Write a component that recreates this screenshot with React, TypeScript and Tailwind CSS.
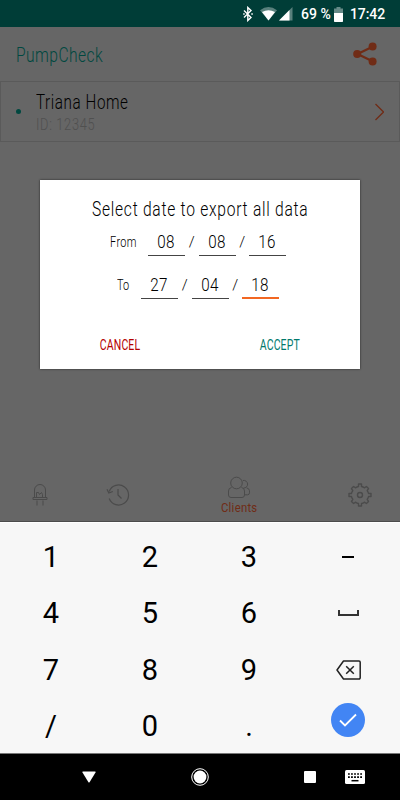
import React from 'react';

function StatusBar() {
  return (
    <div className="flex h-[27px] shrink-0 items-center bg-[#003d37] pl-[243px] pt-[1px] text-[14px] font-medium text-white">
      <svg className="h-4 w-[10px]" viewBox="0 0 10 16" fill="none" stroke="#fff" strokeWidth="1.4">
        <path d="M1 4.500 8 11.500 4.800 14.500V1.500L8 4.500 1 11.500" />
        <path d="M.2 8h1.500M8.300 8h1.500" strokeWidth="1.600" />
      </svg>
      <svg className="ml-[7px] h-[14px] w-[17px]" viewBox="0 0 17 14">
        <path d="M0 3.200Q8.500-3 17 3.200L8.500 13.500Z" fill="#fff" opacity=".35" />
        <path d="M2 5Q8.500 1.500 15 5L8.500 13.500Z" fill="#fff" />
      </svg>
      <svg className="ml-[2px] h-[14px] w-[14px]" viewBox="0 0 14 14">
        <path d="M0 13.500 13.500 0V13.500Z" fill="#fff" opacity=".35" />
        <path d="M0 13.500 10.500 3V13.500Z" fill="#fff" />
      </svg>
      <span className="ml-[8px] w-[28px] whitespace-nowrap">69 %</span>
      <svg className="ml-[5px] h-[15px] w-[9px]" viewBox="0 0 9 15">
        <path d="M2.500 0h4v1.500H9V15H0V1.500h2.500Z" fill="#fff" opacity=".4" />
        <path d="M0 6h9v8a1 1 0 0 1-1 1H1a1 1 0 0 1-1-1Z" fill="#fff" />
      </svg>
      <span className="ml-[7px] whitespace-nowrap tracking-[-0.1px]">17:42</span>
    </div>
  );
}

function Field({ value, line }: { value: string; line: string }) {
  return (
    <div className={'flex h-[26px] w-[37px] justify-center ' + line}>
      <span className="origin-center scale-x-[.8] text-[19px] leading-[24px] tracking-[0.500px]">{value}</span>
    </div>
  );
}

function Slash() {
  return <span className="w-[13.500px] pb-[3px] text-center text-[15px] leading-[22px]">/</span>;
}

function Dialog() {
  const plain = 'border-b border-[#444]';
  return (
    <div className="absolute left-[40px] top-[180px] flex h-[189px] w-[320px] flex-col bg-white font-light text-black shadow-[0_0_2px_#222]">
      <div className="mt-[17px] flex h-[24px] justify-center">
        <span className="origin-center translate-x-[0.500px] scale-x-[.78] whitespace-nowrap text-[20px] leading-[24px] tracking-[0.950px]">Select date to export all data</span>
      </div>
      <div className="mt-[9px] flex h-[26px] items-end pl-[70px]">
        <span className="w-[38px] origin-left scale-x-[.78] pb-[4px] text-[14px] leading-[20px] tracking-[0.500px]">From</span>
        <Field value="08" line={plain} />
        <Slash />
        <Field value="08" line={plain} />
        <Slash />
        <Field value="16" line={plain} />
      </div>
      <div className="mt-[17px] flex h-[26px] items-end pl-[77px]">
        <span className="w-[24px] origin-left scale-x-[.78] pb-[4px] text-[14px] leading-[20px]">To</span>
        <Field value="27" line={plain} />
        <Slash />
        <Field value="04" line={plain} />
        <Slash />
        <Field value="18" line="border-b-2 border-[#f26722]" />
      </div>
      <div className="mt-[36px] flex text-[14px] font-normal leading-[20px]">
        <span className="w-[160px] text-center text-[#b40000]"><span className="inline-block scale-x-[.75] tracking-[0.200px]">CANCEL</span></span>
        <span className="w-[160px] text-center text-[#00796b]"><span className="inline-block scale-x-[.75] tracking-[0.200px]">ACCEPT</span></span>
      </div>
    </div>
  );
}

function BottomTabs() {
  return (
    <div className="flex h-[51px] shrink-0 items-start pl-[32px]">
      <svg className="mt-[13px] h-[24px] w-[16px]" viewBox="0 0 16 24" fill="none" stroke="#4b4b4b">
        <path d="M2.500 14.500V7a5.500 5.500 0 0 1 11 0v7.500M1 14.500h14v2H1ZM5 17.500v5M11 17.500v5M4.500 14V9.500h2l1 2 2-2 1 2v2.500" />
      </svg>
      <svg className="ml-[58px] mt-[13px] h-[24px] w-[24px]" viewBox="0 0 24 24" fill="none" stroke="#4b4b4b" strokeWidth="1.200">
        <path d="M3.200 8.500a10 10 0 1 1 0 7M1 6.200l1.800 3.800 4-1.500M12 6v6l3.500 3.500" />
      </svg>
      <div className="ml-[89px] mt-[6px] flex w-[40px] flex-col items-center text-[13px] leading-[14px] text-[#702c16]">
        <svg className="h-[24px] w-[24px]" viewBox="0 0 24 24" fill="none" stroke="#4b4b4b">
          <circle cx="9.500" cy="7" r="5.800" />
          <path d="M4.500 11.500Q1.500 12 1.500 15v4q0 2.500 2.500 2.500h11q2.500 0 2.500-2.500v-4q0-3-3-3.500M16 4.500a3.800 3.800 0 1 1 .5 7.500M19.500 11.800q3 .8 3 3v2q0 2-2 2h-2.500" />
        </svg>
        <span className="origin-center translate-x-[0.500px] scale-x-[.84] whitespace-nowrap text-[13.500px] font-normal tracking-[0.300px]">Clients</span>
      </div>
      <svg className="ml-[89px] mt-[13px] h-[24px] w-[24px]" viewBox="0 0 24 24" fill="none" stroke="#4b4b4b" strokeWidth="1.400">
        <circle cx="12" cy="12" r="2.500" />
        <path d="M10.500 1h3v2.500q1.700.3 2.800 1.300L18.400 3.500l2.100 2.100-1.300 2.100q1 1.100 1.300 2.800H23v3h-2.500q-.3 1.700-1.300 2.800l1.300 2.100-2.100 2.100-2.100-1.300q-1.100 1-2.800 1.300V23h-3v-2.500q-1.700-.3-2.800-1.300l-2.100 1.300-2.100-2.100 1.300-2.100q-1-1.100-1.300-2.800H1v-3h2.500q.3-1.700 1.300-2.800L3.500 5.600l2.100-2.100 2.100 1.300q1.100-1 2.800-1.300Z" strokeLinejoin="round" />
      </svg>
    </div>
  );
}

function Key({ children }: { children: React.ReactNode }) {
  return <div className="flex items-center justify-center">{children}</div>;
}

function Keyboard() {
  return (
    <div className="h-[231px] shrink-0 overflow-hidden border-t border-white bg-[#f7f7f7] pl-[1.500px] pt-[6px]">
      <div className="grid grid-cols-[repeat(4,99px)] grid-rows-[repeat(4,56.500px)] text-[29px] leading-none text-black">
        <Key>1</Key><Key>2</Key><Key>3</Key>
        <Key><div className="h-[2px] w-[12px] bg-black" /></Key>
        <Key>4</Key><Key>5</Key><Key>6</Key>
        <Key><div className="mb-[1px] h-[6px] w-[21px] border-2 border-t-0 border-[#333]" /></Key>
        <Key>7</Key><Key>8</Key><Key>9</Key>
        <Key>
          <svg className="h-[20px] w-[25px]" viewBox="0 0 25 20" fill="none" stroke="#222" strokeWidth="1.500">
            <path d="M7.500 1H23a1.200 1.200 0 0 1 1.200 1.200v15.600A1.200 1.200 0 0 1 23 19H7.500L1 10Z" strokeLinejoin="round" />
            <path d="m10.200 6.200 7.600 7.600m0-7.600-7.600 7.600" />
          </svg>
        </Key>
        <Key>/</Key><Key>0</Key><Key>.</Key>
        <Key>
          <div className="mb-[13px] flex h-[34px] w-[34px] items-center justify-center rounded-full bg-[#4285f4]">
            <svg className="h-[14px] w-[18px]" viewBox="0 0 18 14" fill="none" stroke="#fff" strokeWidth="1.800"><path d="m1 7.500 5 5L17 1.500" /></svg>
          </div>
        </Key>
      </div>
    </div>
  );
}

function NavBar() {
  return (
    <div className="flex h-[47px] shrink-0 items-center border-t border-[#777] bg-black pl-[82px]">
      <svg className="h-[12px] w-[14px]" viewBox="0 0 14 12" fill="#fff"><path d="M1 .5h12q1 0 .5 1L7.700 11q-.7 1-1.400 0L.5 1.500Q0 .5 1 .5Z" /></svg>
      <svg className="ml-[95px] h-[18px] w-[18px]" viewBox="0 0 18 18"><circle cx="9" cy="9" r="8.300" fill="none" stroke="#fff" /><circle cx="9" cy="9" r="6.400" fill="#fff" /></svg>
      <div className="ml-[95px] h-[12px] w-[12px] rounded-[1px] bg-white" />
      <svg className="ml-[29px] h-[14px] w-[20px]" viewBox="0 0 20 14">
        <rect width="20" height="14" rx="1.500" fill="#fff" />
        <path d="M3 4h14M3 7.200h14" stroke="#000" strokeWidth="1.700" strokeDasharray="1.800 1.250" />
        <path d="M6.500 10.700h7" stroke="#000" strokeWidth="1.500" />
      </svg>
    </div>
  );
}

export default function App() {
  return (
    <div className="relative flex h-[800px] w-[400px] flex-col overflow-hidden bg-[#666] font-['Roboto','Liberation_Sans',sans-serif]">
      <StatusBar />
      <div className="flex h-[54px] shrink-0 items-center justify-between pl-[16px] pr-[23px]">
        <span className="origin-left scale-x-[.78] pt-[1px] text-[20px] font-light tracking-[0.550px] text-[#004840]">PumpCheck</span>
        <svg className="h-[24px] w-[24px]" viewBox="0 0 24 24" fill="#702c16">
          <path d="M20 4.500 4.500 12 20 19.500" fill="none" stroke="#702c16" strokeWidth="2.200" />
          <circle cx="4.200" cy="12" r="4" /><circle cx="19.600" cy="4.500" r="4" /><circle cx="19.600" cy="19.500" r="4" />
        </svg>
      </div>
      <div className="flex h-[61px] shrink-0 items-center border border-[#5a5a5a] pl-[15px] pr-[15px]">
        <div className="h-[5px] w-[5px] rounded-full bg-[#004840]" />
        <div className="ml-[15px] flex-1 pt-[4px] font-light">
          <div className="origin-left scale-x-[.78] text-[19.500px] leading-[22px] tracking-[0.750px] text-black">Triana Home</div>
          <div className="origin-left scale-x-[.8] text-[16px] leading-[22px] tracking-[0.850px] text-[#505050]">ID: 12345</div>
        </div>
        <svg className="h-[18px] w-[9px]" viewBox="0 0 9 18" fill="none" stroke="#702c16" strokeWidth="1.300"><path d="m.5 1 8 8-8 8" /></svg>
      </div>
      <div className="flex-1" />
      <BottomTabs />
      <div className="h-px shrink-0 bg-[#4b4b4b]" />
      <Keyboard />
      <NavBar />
      <Dialog />
    </div>
  );
}
